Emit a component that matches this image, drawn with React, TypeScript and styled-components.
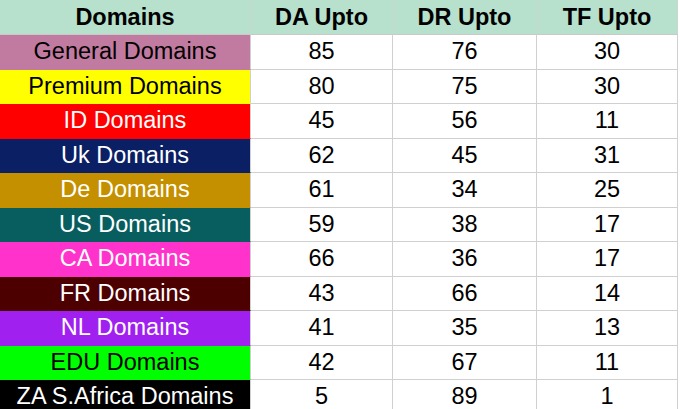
import React from 'react';
import styled, { createGlobalStyle } from 'styled-components';

const GlobalStyle = createGlobalStyle`
    html, body {
        margin: 0;
        padding: 0;
        background: #ffffff;
    }
`;

const Sheet = styled.div({
    width: '678px',
    display: 'grid',
    gridTemplateColumns: '251px 142px 144px 141px',
    gridTemplateRows: '35px',
    gridAutoRows: '34.5px',
    fontFamily: '"Liberation Sans", Arial, sans-serif',
    fontSize: '23.5px',
    color: '#000000',
    overflow: 'hidden',
});

const HeaderCell = styled.div({
    display: 'flex',
    alignItems: 'center',
    justifyContent: 'center',
    backgroundColor: '#b7e1cd',
    fontWeight: 700,
    borderRight: '1px solid #c6d8cf',
    borderBottom: '1px solid #c9c9c9',
    boxSizing: 'border-box',
});

const Cell = styled.div<{ $bg?: string; $fg?: string }>(({ $bg, $fg }) => ({
    display: 'flex',
    alignItems: 'center',
    justifyContent: 'center',
    whiteSpace: 'nowrap',
    backgroundColor: $bg ?? '#ffffff',
    color: $fg ?? '#000000',
    borderRight: '1px solid #d0d0d0',
    borderBottom: `1px solid ${$bg ?? '#d0d0d0'}`,
    boxSizing: 'border-box',
}));

type Row = {
    name: string;
    bg: string;
    fg: string;
    da: number;
    dr: number;
    tf: number;
};

const rows: Row[] = [
    { name: 'General Domains', bg: '#c27ba0', fg: '#000000', da: 85, dr: 76, tf: 30 },
    { name: 'Premium Domains', bg: '#ffff00', fg: '#000000', da: 80, dr: 75, tf: 30 },
    { name: 'ID Domains', bg: '#ff0000', fg: '#ffffff', da: 45, dr: 56, tf: 11 },
    { name: 'Uk Domains', bg: '#0b1f64', fg: '#ffffff', da: 62, dr: 45, tf: 31 },
    { name: 'De Domains', bg: '#c49000', fg: '#ffffff', da: 61, dr: 34, tf: 25 },
    { name: 'US Domains', bg: '#085e5e', fg: '#ffffff', da: 59, dr: 38, tf: 17 },
    { name: 'CA Domains', bg: '#ff33cc', fg: '#ffffff', da: 66, dr: 36, tf: 17 },
    { name: 'FR Domains', bg: '#4c0000', fg: '#ffffff', da: 43, dr: 66, tf: 14 },
    { name: 'NL Domains', bg: '#a020f0', fg: '#ffffff', da: 41, dr: 35, tf: 13 },
    { name: 'EDU Domains', bg: '#00ff00', fg: '#000000', da: 42, dr: 67, tf: 11 },
    { name: 'ZA S.Africa Domains', bg: '#000000', fg: '#ffffff', da: 5, dr: 89, tf: 1 },
];

const App: React.FC = () => {
    return (
        <>
            <GlobalStyle />
            <Sheet>
                <HeaderCell>Domains</HeaderCell>
                <HeaderCell>DA Upto</HeaderCell>
                <HeaderCell>DR Upto</HeaderCell>
                <HeaderCell>TF Upto</HeaderCell>
                {rows.map((row) => (
                    <React.Fragment key={row.name}>
                        <Cell $bg={row.bg} $fg={row.fg}>
                            {row.name}
                        </Cell>
                        <Cell>{row.da}</Cell>
                        <Cell>{row.dr}</Cell>
                        <Cell>{row.tf}</Cell>
                    </React.Fragment>
                ))}
            </Sheet>
        </>
    );
};

export default App;
